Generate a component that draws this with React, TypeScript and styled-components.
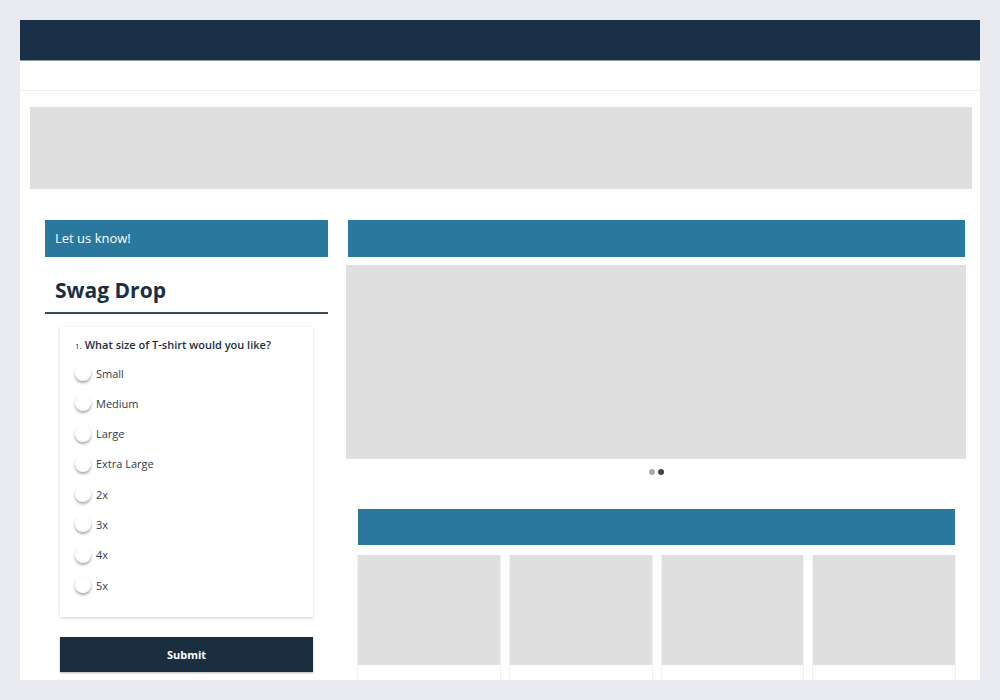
import React from 'react';
import styled, { createGlobalStyle } from 'styled-components';

const GlobalStyle = createGlobalStyle`
	html, body {
		margin: 0;
		padding: 0;
		background: #eaebf0;
		font-family: 'Open Sans', 'Noto Sans', sans-serif;
	}
	#root {
		padding: 20px;
	}
`;

const sizes = ['Small', 'Medium', 'Large', 'Extra Large', '2x', '3x', '4x', '5x'];

const App = () => {
	return (
		<>
			<GlobalStyle />
			<Frame>
				<Header />
				<NavBar />
				<Content>
					<Banner />
					<Columns>
						<LeftColumn>
							<SectionBar>Let us know!</SectionBar>
							<Title>Swag Drop</Title>
							<FormCard>
								<Question>
									<QuestionNumber>1.</QuestionNumber>
									What size of T-shirt would you like?
								</Question>
								<OptionList>
									{sizes.map((size) => (
										<Option key={size}>
											<Radio />
											<OptionLabel>{size}</OptionLabel>
										</Option>
									))}
								</OptionList>
							</FormCard>
							<SubmitButton>Submit</SubmitButton>
						</LeftColumn>
						<RightColumn>
							<SectionBar inset="0 1px 0 2px" />
							<Carousel />
							<Dots>
								<Dot active={false} />
								<Dot active />
							</Dots>
							<SectionBar inset="0 11px 0 12px" height={36} />
							<CardGrid>
								{[0, 1, 2, 3].map((i) => (
									<Tile key={i}>
										<TileImage />
									</Tile>
								))}
							</CardGrid>
						</RightColumn>
					</Columns>
				</Content>
			</Frame>
		</>
	);
};

export default App;

const Frame = styled.div`
	width: 960px;
	height: 660px;
	background: #fff;
	overflow: hidden;
	display: flex;
	flex-direction: column;
`;

const Header = styled.header`
	height: 40px;
	flex-shrink: 0;
	background: #1a3046;
	border-bottom: 1px solid #8d9ca8;
`;

const NavBar = styled.nav`
	height: 29px;
	flex-shrink: 0;
	border-bottom: 1px solid #ececec;
`;

const Content = styled.main`
	padding: 16px 8px 0 10px;
`;

const Banner = styled.div`
	height: 82px;
	background: #dfdfdf;
`;

const Columns = styled.div`
	display: flex;
	gap: 18px;
	padding: 31px 0 0 15px;
`;

const LeftColumn = styled.section`
	width: 283px;
	display: flex;
	flex-direction: column;
`;

const RightColumn = styled.section`
	width: 620px;
	display: flex;
	flex-direction: column;
`;

const SectionBar = styled.div<{ inset?: string; height?: number }>`
	height: ${({ height }) => height || 37}px;
	margin: ${({ inset }) => inset || '0'};
	background: #2a789d;
	color: #fff;
	font-size: 13px;
	line-height: 37px;
	padding-left: 10px;
	box-sizing: border-box;
	flex-shrink: 0;
`;

const Title = styled.h1`
	margin: 0;
	padding: 19px 10px 8px;
	font-size: 21px;
	font-weight: 700;
	color: #1a2e44;
	line-height: 28px;
	border-bottom: 2px solid #3d4b59;
`;

const FormCard = styled.div`
	margin: 13px 15px 0;
	height: 290px;
	box-sizing: border-box;
	padding: 10px 15px;
	background: #fff;
	box-shadow: 0 1px 3px rgba(0, 0, 0, 0.2);
`;

const Question = styled.div`
	font-size: 11px;
	font-weight: 600;
	color: #1a2e44;
	line-height: 16px;
`;

const QuestionNumber = styled.span`
	font-size: 8px;
	font-weight: 400;
	margin-right: 3px;
`;

const OptionList = styled.div`
	display: flex;
	flex-direction: column;
	gap: 14.3px;
	margin-top: 11px;
`;

const Option = styled.label`
	display: flex;
	align-items: center;
	gap: 5px;
	height: 16px;
`;

const Radio = styled.span`
	width: 16px;
	height: 16px;
	border-radius: 50%;
	background: #fff;
	box-shadow: 0 2px 3px rgba(0, 0, 0, 0.35);
`;

const OptionLabel = styled.span`
	font-size: 11px;
	color: #2d3b49;
`;

const SubmitButton = styled.button`
	margin: 20px 15px 0;
	height: 35px;
	border: none;
	background: #1a2e40;
	color: #fff;
	font-family: 'Open Sans', sans-serif;
	font-size: 11px;
	font-weight: 700;
	box-shadow: 0 1px 2px rgba(0, 0, 0, 0.3);
`;

const Carousel = styled.div`
	margin-top: 8px;
	height: 194px;
	background: #dfdfdf;
`;

const Dots = styled.div`
	display: flex;
	justify-content: center;
	gap: 3px;
	padding: 10px 0 34px;
`;

const Dot = styled.span<{ active: boolean }>`
	width: 6px;
	height: 6px;
	border-radius: 50%;
	background: ${({ active }) => (active ? '#444' : '#aaa')};
`;

const CardGrid = styled.div`
	display: grid;
	grid-template-columns: repeat(4, 1fr);
	gap: 8px;
	margin: 10px 10px 0 11px;
`;

const Tile = styled.div`
	height: 140px;
	border: 1px solid #f0f0f0;
	border-top: none;
	background: #fff;
`;

const TileImage = styled.div`
	height: 110px;
	background: #dfdfdf;
`;
